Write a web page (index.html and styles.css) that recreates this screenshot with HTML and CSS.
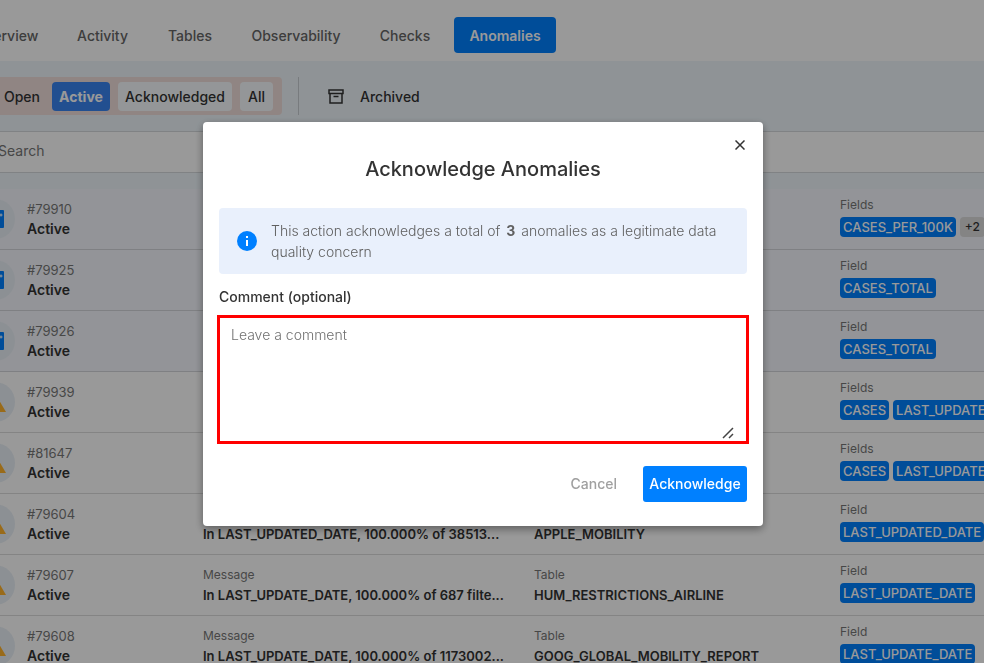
FILE: index.html
```html
<!DOCTYPE html>
<html lang="en">
<head>
    <meta charset="UTF-8">
    <meta name="viewport" content="width=device-width, initial-scale=1.0">
    <title>Anomalies</title>
    <link rel="stylesheet" href="styles.css">
</head>
<body>
    <svg class="sprite" aria-hidden="true">
        <symbol id="icon-task" viewBox="0 0 18 18">
            <rect width="18" height="18" rx="1" fill="#0080ff"/>
            <path d="M3 9l3 3 5-6M15 3.500v3M13.500 5h3" fill="none" stroke="#fff" stroke-width="1"/>
        </symbol>
        <symbol id="icon-warning" viewBox="0 0 22 19">
            <path d="M11 0L22 19H0z" fill="#ffb32c"/>
            <path d="M10 7h2v5h-2zM10 14h2v2h-2z" fill="#fff"/>
        </symbol>
    </svg>

    <header>
        <nav class="tabs">
            <a href="#">Overview</a>
            <a href="#">Activity</a>
            <a href="#">Tables</a>
            <a href="#">Observability</a>
            <a href="#">Checks</a>
            <a href="#" class="current">Anomalies</a>
        </nav>
    </header>

    <main>
        <div class="toolbar">
            <div class="filters">
                <button type="button" class="plain">Open</button>
                <button type="button" class="selected">Active</button>
                <button type="button">Acknowledged</button>
                <button type="button">All</button>
            </div>
            <button type="button" class="archived">
                <svg width="16" height="16" viewBox="0 0 16 16">
                    <path d="M1 1h14v3.500H1zM2 5v9h12V5M5.500 7.500h5" fill="none" stroke="#333" stroke-width="1.500"/>
                </svg>
                Archived
            </button>
        </div>

        <input type="search" class="search" placeholder="Search" aria-label="Search">

        <table id="anomalies">
            <colgroup>
                <col class="col-status">
                <col class="col-message">
                <col class="col-table">
                <col>
            </colgroup>
            <tbody>
                <tr class="checked">
                    <td><div class="status"><span class="circle"><svg width="18" height="18"><use href="#icon-task"/></svg></span><div><small>#79910</small><b>Active</b></div></div></td>
                    <td></td>
                    <td></td>
                    <td><small>Fields</small><div class="fields"><span>CASES_PER_100K</span><span class="more">+2</span></div></td>
                </tr>
                <tr class="checked">
                    <td><div class="status"><span class="circle"><svg width="18" height="18"><use href="#icon-task"/></svg></span><div><small>#79925</small><b>Active</b></div></div></td>
                    <td></td>
                    <td></td>
                    <td><small>Field</small><div class="fields"><span>CASES_TOTAL</span></div></td>
                </tr>
                <tr class="checked">
                    <td><div class="status"><span class="circle"><svg width="18" height="18"><use href="#icon-task"/></svg></span><div><small>#79926</small><b>Active</b></div></div></td>
                    <td></td>
                    <td></td>
                    <td><small>Field</small><div class="fields"><span>CASES_TOTAL</span></div></td>
                </tr>
                <tr>
                    <td><div class="status"><span class="circle"><svg width="22" height="19"><use href="#icon-warning"/></svg></span><div><small>#79939</small><b>Active</b></div></div></td>
                    <td></td>
                    <td></td>
                    <td><small>Fields</small><div class="fields"><span>CASES</span><span>LAST_UPDATE_DATE</span></div></td>
                </tr>
                <tr>
                    <td><div class="status"><span class="circle"><svg width="22" height="19"><use href="#icon-warning"/></svg></span><div><small>#81647</small><b>Active</b></div></div></td>
                    <td></td>
                    <td></td>
                    <td><small>Fields</small><div class="fields"><span>CASES</span><span>LAST_UPDATE_DATE</span></div></td>
                </tr>
                <tr>
                    <td><div class="status"><span class="circle"><svg width="22" height="19"><use href="#icon-warning"/></svg></span><div><small>#79604</small><b>Active</b></div></div></td>
                    <td><small>Message</small><b>In LAST_UPDATED_DATE, 100.000% of 38513...</b></td>
                    <td><small>Table</small><b>APPLE_MOBILITY</b></td>
                    <td><small>Field</small><div class="fields"><span>LAST_UPDATED_DATE</span></div></td>
                </tr>
                <tr>
                    <td><div class="status"><span class="circle"><svg width="22" height="19"><use href="#icon-warning"/></svg></span><div><small>#79607</small><b>Active</b></div></div></td>
                    <td><small>Message</small><b>In LAST_UPDATE_DATE, 100.000% of 687 filte...</b></td>
                    <td><small>Table</small><b>HUM_RESTRICTIONS_AIRLINE</b></td>
                    <td><small>Field</small><div class="fields"><span>LAST_UPDATE_DATE</span></div></td>
                </tr>
                <tr>
                    <td><div class="status"><span class="circle"><svg width="22" height="19"><use href="#icon-warning"/></svg></span><div><small>#79608</small><b>Active</b></div></div></td>
                    <td><small>Message</small><b>In LAST_UPDATE_DATE, 100.000% of 1173002...</b></td>
                    <td><small>Table</small><b>GOOG_GLOBAL_MOBILITY_REPORT</b></td>
                    <td><small>Field</small><div class="fields"><span>LAST_UPDATE_DATE</span></div></td>
                </tr>
            </tbody>
        </table>
    </main>

    <div class="overlay">
        <form class="modal" role="dialog" aria-labelledby="modal-title">
            <button type="button" class="close" aria-label="Close">
                <svg width="10" height="10" viewBox="0 0 10 10">
                    <path d="M0.500 0.500l9 9M9.500 0.500l-9 9" stroke="#333" stroke-width="1.500"/>
                </svg>
            </button>
            <h1 id="modal-title">Acknowledge Anomalies</h1>
            <div class="notice">
                <svg width="20" height="20" viewBox="0 0 20 20">
                    <circle cx="10" cy="10" r="10" fill="#0080ff"/>
                    <path d="M9 5h2v2H9zM9 9h2v6H9z" fill="#fff"/>
                </svg>
                <p>This action acknowledges a total of <strong>3</strong> anomalies as a legitimate data quality concern</p>
            </div>
            <label for="comment">Comment (optional)</label>
            <div class="comment-box">
                <textarea id="comment" placeholder="Leave a comment"></textarea>
                <svg class="grip" width="12" height="12" viewBox="0 0 12 12">
                    <path d="M1 11L11 1M7 11l4-4" stroke="#444" stroke-width="1.500"/>
                </svg>
            </div>
            <div class="actions">
                <button type="button" class="cancel">Cancel</button>
                <button type="submit" class="submit">Acknowledge</button>
            </div>
        </form>
    </div>
</body>
</html>
```
FILE: styles.css
```css
* {
    box-sizing: border-box;
}

body {
    margin: 0;
    height: 100vh;
    overflow: hidden;
    background: #eff6fb;
    color: #333;
    font-family: Inter, "Open Sans", sans-serif;
    font-size: 14px;
    line-height: 20px;
}

button,
input,
textarea {
    font: inherit;
    color: inherit;
}

button {
    border: none;
    padding: 0;
    background: none;
    font-weight: 500;
    cursor: pointer;
}

.sprite {
    display: none;
}

header {
    padding: 17px 0 8px;
    background: #fff;
}

.tabs {
    display: grid;
    grid-template-columns: 93px 83px 76px 120px 82px 102px;
    gap: 8px;
    margin-left: -40px;
}

.tabs a {
    padding: 9px 0 7px;
    border-radius: 4px;
    color: #666;
    font-weight: 500;
    text-align: center;
    text-decoration: none;
}

.tabs .current {
    background: #0080ff;
    color: #fff;
    font-weight: 600;
}

.toolbar {
    display: flex;
    padding: 16px 0;
}

.filters {
    display: grid;
    grid-template-columns: 52px 58px 114px 33px;
    gap: 8px;
    align-items: center;
    height: 38px;
    margin-left: -8px;
    padding-right: 9px;
    border-radius: 4px;
    background: #f0dedb;
}

.filters button {
    height: 29px;
    padding-top: 1px;
    border-radius: 4px;
    background: #f7fbfd;
}

.filters .plain {
    padding-left: 8px;
    background: none;
}

.filters .selected {
    background: #3a84f0;
    color: #fff;
    font-weight: 700;
}

.archived {
    display: flex;
    align-items: center;
    gap: 16px;
    margin-left: 16px;
    padding: 1px 0 0 29px;
    border-left: 1px solid #c9cdd2;
}

.search {
    display: block;
    width: 100%;
    height: 42px;
    margin-bottom: 16px;
    padding: 0 0 3px;
    border: 1px solid #d5d9dc;
    border-width: 1px 0;
    background: #fff;
    text-indent: -2px;
    appearance: none;
}

.search::placeholder {
    color: #777;
}

table {
    width: 100%;
    table-layout: fixed;
    border-spacing: 0;
    background: #fff;
}

.col-status {
    width: 203px;
}

.col-message {
    width: 331px;
}

.col-table {
    width: 306px;
}

td {
    height: 61px;
    padding: 0;
    border-bottom: 1px solid #dcdcdc;
    white-space: nowrap;
}

td:last-child {
    padding-bottom: 6px;
}

.checked td {
    background: #f5f7fd;
    border-color: #d4d6da;
}

small,
b {
    display: block;
}

small {
    color: #777;
    font-size: 12px;
}

b {
    font-size: 13px;
    font-weight: 600;
}

.status {
    display: flex;
    align-items: center;
    gap: 12px;
    margin-left: -25px;
}

.status small {
    font-size: 13px;
}

.status b {
    font-size: 14px;
}

.circle {
    display: flex;
    align-items: center;
    justify-content: center;
    width: 40px;
    height: 40px;
    border-radius: 50%;
    background: #eaf1f7;
}

.fields {
    display: flex;
    gap: 4px;
    padding-top: 2px;
}

.fields span {
    padding: 0 3px;
    border-radius: 4px;
    background: #0080ff;
    color: #fff;
    font-size: 13px;
    font-weight: 500;
}

.fields .more {
    padding: 0 5px;
    background: #dcdcdc;
    color: #333;
    font-size: 12px;
}

.overlay {
    position: fixed;
    inset: 0;
    display: flex;
    align-items: center;
    justify-content: center;
    padding: 0 18px 15px 0;
    background: rgba(0, 0, 0, 0.4);
}

.modal {
    position: relative;
    width: 560px;
    padding: 32px 16px 24px;
    border-radius: 4px;
    background: #fff;
    box-shadow: 0 3px 8px rgba(0, 0, 0, 0.4);
}

.close {
    position: absolute;
    top: 12px;
    right: 12px;
    display: grid;
    place-items: center;
    width: 22px;
    height: 22px;
}

h1 {
    margin: 0 0 24px;
    font-size: 20px;
    font-weight: 500;
    line-height: 30px;
    text-align: center;
}

.notice {
    display: flex;
    align-items: center;
    gap: 14px;
    padding: 12px 18px;
    border-radius: 4px;
    background: #e9f0fc;
    color: #606060;
}

.notice svg {
    flex: none;
}

.notice p {
    margin: 0;
    font-weight: 300;
    line-height: 21px;
}

.notice strong {
    margin: 0 2px;
    font-weight: 700;
}

label {
    display: block;
    margin: 13px 0 10px;
    font-weight: 500;
}

.comment-box {
    position: relative;
}

textarea {
    display: block;
    width: 100%;
    height: 125px;
    padding: 8px 12px;
    border: none;
    border-radius: 0;
    outline: 3px solid #f00;
    outline-offset: -1px;
    resize: none;
}

textarea::placeholder {
    color: #707070;
    font-weight: 300;
}

.grip {
    position: absolute;
    right: 13px;
    bottom: 3px;
}

.actions {
    display: flex;
    justify-content: flex-end;
    gap: 26px;
    margin-top: 24px;
}

.cancel {
    color: #a0a0a0;
}

.submit {
    width: 104px;
    height: 36px;
    border-radius: 3px;
    background: #0080ff;
    color: #fff;
}
```
